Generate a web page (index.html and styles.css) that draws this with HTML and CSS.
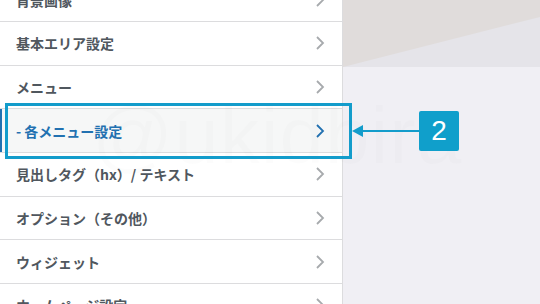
FILE: index.html
```html
<!DOCTYPE html>
<html lang="ja">
<head>
    <meta charset="UTF-8">
    <meta name="viewport" content="width=device-width, initial-scale=1.0">
    <title>カスタマイズ - 各メニュー設定</title>
    <link rel="stylesheet" href="styles.css">
</head>
<body>
    <div class="screen">
        <aside class="sidebar">
            <ul class="sections">
                <li class="section"><span>背景画像</span><svg class="chevron" viewBox="0 0 10 16"><polyline points="2,2 8,8 2,14"/></svg></li>
                <li class="section"><span>基本エリア設定</span><svg class="chevron" viewBox="0 0 10 16"><polyline points="2,2 8,8 2,14"/></svg></li>
                <li class="section"><span>メニュー</span><svg class="chevron" viewBox="0 0 10 16"><polyline points="2,2 8,8 2,14"/></svg></li>
                <li class="section active"><span>- 各メニュー設定</span><svg class="chevron" viewBox="0 0 10 16"><polyline points="2,2 8,8 2,14"/></svg></li>
                <li class="section"><span>見出しタグ（hx）/ テキスト</span><svg class="chevron" viewBox="0 0 10 16"><polyline points="2,2 8,8 2,14"/></svg></li>
                <li class="section"><span>オプション（その他）</span><svg class="chevron" viewBox="0 0 10 16"><polyline points="2,2 8,8 2,14"/></svg></li>
                <li class="section"><span>ウィジェット</span><svg class="chevron" viewBox="0 0 10 16"><polyline points="2,2 8,8 2,14"/></svg></li>
                <li class="section"><span>ホームページ設定</span><svg class="chevron" viewBox="0 0 10 16"><polyline points="2,2 8,8 2,14"/></svg></li>
            </ul>
        </aside>

        <main class="preview">
            <svg class="preview-top" viewBox="0 0 197 67" preserveAspectRatio="none">
                <rect width="197" height="67" fill="#e0dcdb"/>
                <polygon points="0,67 197,17 197,67" fill="#e5e4e9"/>
            </svg>
        </main>

        <!-- annotation layer -->
        <div class="watermark">@ukidbira</div>
        <div class="callout-frame"></div>
        <div class="callout">
            <span class="arrow-head"></span>
            <span class="arrow-line"></span>
            <span class="badge">2</span>
        </div>
    </div>
</body>
</html>
```

FILE: styles.css
```css
* {
    margin: 0;
    padding: 0;
    box-sizing: border-box;
}

body {
    background-color: #f0eff4;
    font-family: "Noto Sans CJK JP", "Noto Sans", sans-serif;
    overflow: hidden;
}

.screen {
    position: relative;
    display: flex;
    width: 540px;
    height: 304px;
    overflow: hidden;
}

.sidebar {
    width: 343px;
    flex-shrink: 0;
    background: #fff;
    border-right: 1px solid #dcdcde;
}

.sections {
    list-style: none;
    margin-top: -21.67px;
}

.section {
    display: flex;
    align-items: center;
    justify-content: space-between;
    height: 43.67px;
    padding: 0 17px 0 16px;
    border-bottom: 1px solid #dcdcde;
    color: #50575e;
    font-size: 14px;
    font-weight: 700;
}

.section span {
    line-height: 1;
}

.chevron {
    width: 10px;
    height: 16px;
    fill: none;
    stroke: #a7aaad;
    stroke-width: 1.8;
}

.section.active {
    background: #f6f7f7;
    color: #2271b1;
    box-shadow: inset 2px 0 0 #2271b1;
}

.section.active .chevron {
    stroke: #2271b1;
}

.preview {
    flex: 1;
    background: #f0eff4;
}

.preview-top {
    display: block;
    width: 100%;
    height: 67px;
}

.watermark {
    position: absolute;
    left: 92px;
    top: 90px;
    font-family: "Liberation Sans", sans-serif;
    font-size: 80px;
    letter-spacing: 1px;
    color: rgba(0, 0, 0, 0.012);
    pointer-events: none;
}

.callout-frame {
    position: absolute;
    left: 5px;
    top: 103px;
    width: 347px;
    height: 56px;
    border: 3px solid #139ccb;
}

.callout {
    position: absolute;
    left: 352px;
    top: 111px;
    display: flex;
    align-items: center;
}

.arrow-head {
    width: 0;
    height: 0;
    border-top: 6px solid transparent;
    border-bottom: 6px solid transparent;
    border-right: 11px solid #139ccb;
}

.arrow-line {
    width: 56px;
    height: 2px;
    background: #139ccb;
}

.badge {
    width: 40px;
    height: 40px;
    display: flex;
    align-items: center;
    justify-content: center;
    background: #109fcb;
    border-radius: 2px;
    color: #fff;
    font-family: "Liberation Sans", sans-serif;
    font-size: 28px;
}
```
